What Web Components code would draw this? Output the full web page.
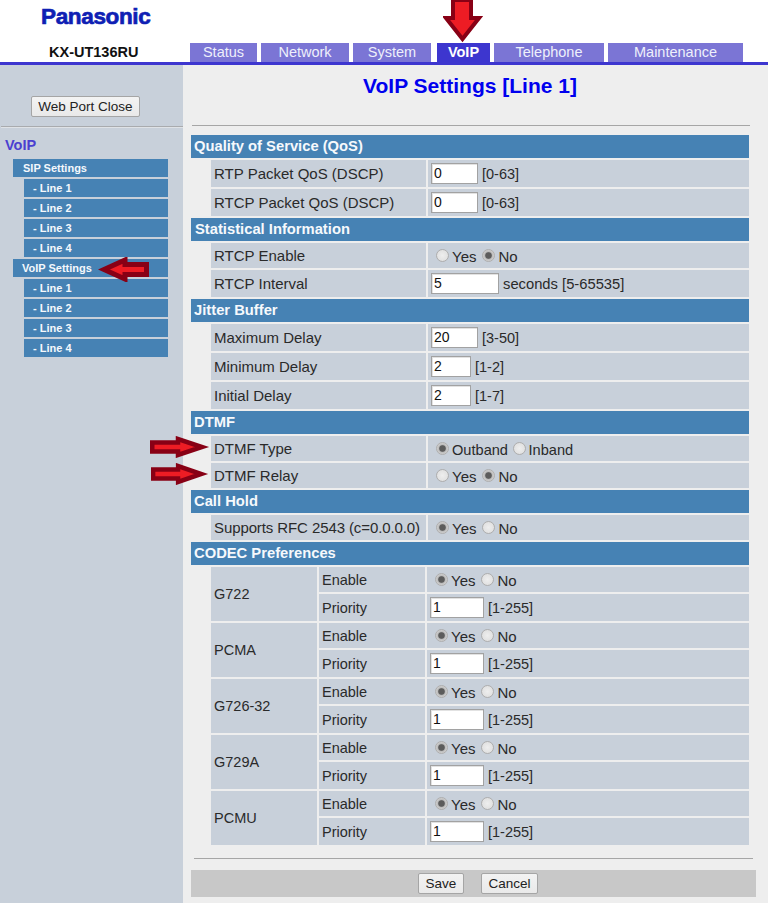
<!DOCTYPE html>
<html lang="en"><head><meta charset="utf-8"><title>VoIP Settings</title>
<style>
html,body{margin:0;padding:0;background:#eee;}
body{font-family:"Liberation Sans",Arial,sans-serif;color:#222;width:768px;height:903px;overflow:hidden;position:relative;}
</style></head><body>
<kx-page>
  <kx-header slot="header" model="KX-UT136RU">
    <kx-tab style="width:67px;margin-right:4px">Status</kx-tab>
    <kx-tab style="width:88px;margin-right:4px">Network</kx-tab>
    <kx-tab style="width:78px;margin-right:6px">System</kx-tab>
    <kx-tab active style="width:53px;margin-right:4px">VoIP</kx-tab>
    <kx-tab style="width:110px;margin-right:4px">Telephone</kx-tab>
    <kx-tab style="width:135px">Maintenance</kx-tab>
  </kx-header>
  <kx-sidebar slot="side" heading="VoIP">
    <kx-nav>SIP Settings</kx-nav>
    <kx-nav sub>- Line 1</kx-nav><kx-nav sub>- Line 2</kx-nav><kx-nav sub>- Line 3</kx-nav><kx-nav sub>- Line 4</kx-nav>
    <kx-nav style="padding-left:9px">VoIP Settings</kx-nav>
    <kx-nav sub>- Line 1</kx-nav><kx-nav sub>- Line 2</kx-nav><kx-nav sub>- Line 3</kx-nav><kx-nav sub>- Line 4</kx-nav>
  </kx-sidebar>
  <kx-main slot="main" heading="VoIP Settings [Line 1]">
    <kx-section heading="Quality of Service (QoS)">
      <kx-row label="RTP Packet QoS (DSCP)"><kx-input w="47" value="0"></kx-input><span>[0-63]</span></kx-row>
      <kx-row label="RTCP Packet QoS (DSCP)"><kx-input w="47" value="0"></kx-input><span>[0-63]</span></kx-row>
    </kx-section>
    <kx-section heading="Statistical Information" style="--pl:4px">
      <kx-row radio label="RTCP Enable"><kx-choice a="Yes" b="No" on="b"></kx-choice></kx-row>
      <kx-row label="RTCP Interval"><kx-input w="68" value="5"></kx-input><span style="font-size:14.75px">seconds [5-65535]</span></kx-row>
    </kx-section>
    <kx-section heading="Jitter Buffer">
      <kx-row label="Maximum Delay"><kx-input w="47" value="20"></kx-input><span>[3-50]</span></kx-row>
      <kx-row label="Minimum Delay"><kx-input w="40" value="2"></kx-input><span>[1-2]</span></kx-row>
      <kx-row label="Initial Delay"><kx-input w="40" value="2"></kx-input><span>[1-7]</span></kx-row>
    </kx-section>
    <kx-section heading="DTMF">
      <kx-row radio label="DTMF Type"><kx-choice a="Outband" b="Inband" on="a" style="--f:14.6px;--g:4.5px"></kx-choice></kx-row>
      <kx-row radio label="DTMF Relay"><kx-choice a="Yes" b="No" on="b"></kx-choice></kx-row>
    </kx-section>
    <kx-section heading="Call Hold">
      <kx-row radio label="Supports RFC 2543 (c=0.0.0.0)" style="--ls:-.1px"><kx-choice a="Yes" b="No" on="a"></kx-choice></kx-row>
    </kx-section>
    <kx-section heading="CODEC Preferences">
      <kx-codec name="G722"></kx-codec>
      <kx-codec name="PCMA"></kx-codec>
      <kx-codec name="G726-32"></kx-codec>
      <kx-codec name="G729A"></kx-codec>
      <kx-codec name="PCMU"></kx-codec>
    </kx-section>
    <kx-actions slot="footer"><kx-button style="width:46px">Save</kx-button><kx-button style="width:57px">Cancel</kx-button></kx-actions>
  </kx-main>
  <kx-arrow dir="down" style="left:443px;top:-2px;width:40px;height:45px"></kx-arrow>
  <kx-arrow dir="left" style="left:98px;top:257px;width:52px;height:25px"></kx-arrow>
  <kx-arrow dir="right" style="left:150px;top:436px;width:60px;height:22px"></kx-arrow>
  <kx-arrow dir="right" style="left:151px;top:463px;width:58px;height:22px"></kx-arrow>
</kx-page>
<script>
function def(name, css, html, init){
  customElements.define(name, class extends HTMLElement{
    constructor(){super();this.attachShadow({mode:'open'});}
    connectedCallback(){
      const at=n=>this.getAttribute(n)||'';
      this.shadowRoot.innerHTML='<style>'+css+'</style>'+(typeof html==='function'?html(at):html);
      if(init)init(this,at);
    }
  });
}
def('kx-page',`:host{display:grid;grid-template-columns:183px 585px;grid-template-rows:65px 838px;width:768px;height:903px;}
 .h{grid-column:1/3;display:block}`,
 `<slot class="h" name="header"></slot><slot name="side"></slot><slot name="main"></slot><slot></slot>`);
def('kx-header',`:host{display:grid;grid-template-columns:190px 1fr;height:65px;box-sizing:border-box;background:#fff;border-bottom:3px solid #3d36cf;}
 .brand{display:flex;flex-direction:column;position:relative}
 .logo{font:bold 22.5px "Liberation Sans",Arial,sans-serif;color:#0f1fb4;-webkit-text-stroke:.7px #0f1fb4;margin:5px 0 0 41px;line-height:24px;letter-spacing:-.35px}
 .model{font:bold 14.5px "Liberation Sans",Arial,sans-serif;color:#111;margin:15px 0 0 49px;line-height:17px;}
 .tabs{display:flex;align-items:flex-end;height:62px}`,
 at=>`<div class="brand"><div class="logo">Panasonic</div><div class="model">${at('model')}</div></div><div class="tabs"><slot></slot></div>`);
def('kx-tab',`:host{display:flex;align-items:center;justify-content:center;height:19px;background:#7b75d5;color:#eef0fb;font:14.5px/19px "Liberation Sans",Arial,sans-serif;}
 :host([active]){background:#3d36cf;color:#fff;font-weight:bold}`,`<slot></slot>`);
def('kx-sidebar',`:host{display:flex;flex-direction:column;background:#c8d0da;height:838px}
 kx-button{align-self:flex-start;margin:31px 0 0 31px;width:109px;font-size:13.5px}
 hr{border:0;border-top:1px solid #a9abae;border-bottom:1px solid #dfe2e6;margin:9px 0 0 1px;width:182px;height:0}
 h2{font:bold 14.5px/17px "Liberation Sans",Arial,sans-serif;color:#4b40d0;margin:9px 0 5px 5px}
 .nav{display:flex;flex-direction:column;gap:2px;margin-left:13px;width:155px;}`,
 at=>`<kx-button>Web Port Close</kx-button><hr><h2>${at('heading')}</h2><div class="nav"><slot></slot></div>`);
def('kx-nav',`:host{display:flex;align-items:center;height:18px;background:#4682b4;color:#f4f8fc;font:bold 11px/18px "Liberation Sans",Arial,sans-serif;padding-left:10px;box-sizing:border-box}
 :host([sub]){margin-left:11px;padding-left:9px;}`,`<slot></slot>`);
def('kx-main',`:host{display:flex;flex-direction:column;padding-left:8px;height:838px;box-sizing:border-box;background:#eee}
 h1{font:bold 21px/24px "Liberation Sans",Arial,sans-serif;color:#0000ee;text-align:center;margin:9px 0 0;width:558px}
 hr{border:0;height:1px;background:#a6a6a6;margin:0}
 .t{margin:27px 0 9px 1px;width:558px}
 .b{margin:13px 0 11px 3px;width:559px}
 .s{display:flex;flex-direction:column;gap:2px;width:558px}`,
 at=>`<h1>${at('heading')}</h1><hr class="t"><div class="s"><slot></slot></div><hr class="b"><slot name="footer"></slot>`);
def('kx-section',`:host{display:flex;flex-direction:column;gap:2px;}
 h3{margin:0;height:23px;background:#4682b4;color:#f6f9fc;font:bold 14.75px/23px "Liberation Sans",Arial,sans-serif;padding-left:var(--pl,3px);}`,
 at=>`<h3>${at('heading')}</h3><slot></slot>`);
def('kx-row',`:host{display:grid;grid-template-columns:215px 1fr;column-gap:2px;margin-left:20px;height:27px;font:14.5px "Liberation Sans",Arial,sans-serif;color:#2a2a2a}
 :host([radio]){height:25px}
 div{background:#c8d0da;display:flex;align-items:center}
 .l{padding-left:3px;box-sizing:border-box;font-size:15px;letter-spacing:var(--ls,0)}
 :host([radio]) .l{padding-bottom:1px}
 .v{padding-left:3px;gap:4px}`,
 at=>`<div class="l">${at('label')}</div><div class="v"><slot></slot></div>`);
def('kx-input',`:host{display:block;}
 div{box-sizing:border-box;height:21px;background:#fff;border:1px solid #a2a2a2;box-shadow:inset 1px 1px 0 #e2e2e2;font:14px/19px "Liberation Sans",Arial,sans-serif;color:#111;padding-left:2px}`,
 at=>`<div style="width:${at('w')}px">${at('value')}</div>`);
def('kx-choice',`:host{display:flex;align-items:center;padding:0 0 0 5px;font:var(--f,15px) "Liberation Sans",Arial,sans-serif;color:#2a2a2a}
 i{display:block;box-sizing:border-box;width:13px;height:13px;border-radius:50%;border:1px solid #aeaeae;background:radial-gradient(circle at 50% 50%,#eeeeee 0,#e2e2e2 65%,#cccccc 100%);margin-right:3px}
 i.on{background:radial-gradient(circle at 50% 50%,#5c5c5c 0,#5c5c5c 36%,#bdbdbd 50%,#e8e8e8 100%)}
 span{margin-right:var(--g,6px);position:relative;top:1px}`,
 at=>`<i class="${at('on')==='a'?'on':''}"></i><span>${at('a')}</span><i class="${at('on')==='b'?'on':''}"></i><span>${at('b')}</span>`);
def('kx-codec',`:host{display:grid;grid-template-columns:106px 106px 1fr;grid-template-rows:25px 27px;gap:2px;margin-left:20px;font:14.5px "Liberation Sans",Arial,sans-serif;color:#2a2a2a}
 div{background:#c8d0da;display:flex;align-items:center;padding-left:3px}
 .n{grid-row:1/3}
 .c{padding-left:3px;gap:4px}`,
 at=>`<div class="n">${at('name')}</div><div>Enable</div><div class="c"><kx-choice a="Yes" b="No" on="a"></kx-choice></div><div>Priority</div><div class="c"><kx-input w="54" value="1"></kx-input><span>[1-255]</span></div>`);
def('kx-actions',`:host{display:flex;align-items:center;justify-content:center;gap:17px;width:565px;height:27px;background:#c8c8c8;box-sizing:border-box;padding-left:9px;font-size:13.5px}`,`<slot></slot>`);
def('kx-button',`:host{display:flex;align-items:center;justify-content:center;box-sizing:border-box;height:21px;white-space:nowrap;border:1px solid #a5a5a5;border-radius:2px;background:linear-gradient(#f3f3f3,#e9e9e9);font:13.5px/19px "Liberation Sans",Arial,sans-serif;color:#222;}`,`<slot></slot>`);
const arrows={
 down:{vb:'0 0 40 45',d:'M10 2H28V20H36L19.5 41L3 20H10Z',w:4},
 left:{vb:'0 0 52 25',d:'M6 12.5L27 3V7.5H48.5V17.5H27V22Z',w:5},
 right:{vb:'0 0 60 22',d:'M2.25 6.5H28V3L52 11L28 19V15.5H2.25Z',w:4.5}
};
def('kx-arrow',`:host{display:block;position:absolute;} svg{display:block;width:100%;height:100%}`,
 at=>{const a=arrows[at('dir')];return `<svg viewBox="${a.vb}" preserveAspectRatio="none"><path d="${a.d}" fill="#ed1c24" stroke="#880015" stroke-width="${a.w}" stroke-linejoin="miter" stroke-miterlimit="6"/></svg>`});
</script>
</body></html>
